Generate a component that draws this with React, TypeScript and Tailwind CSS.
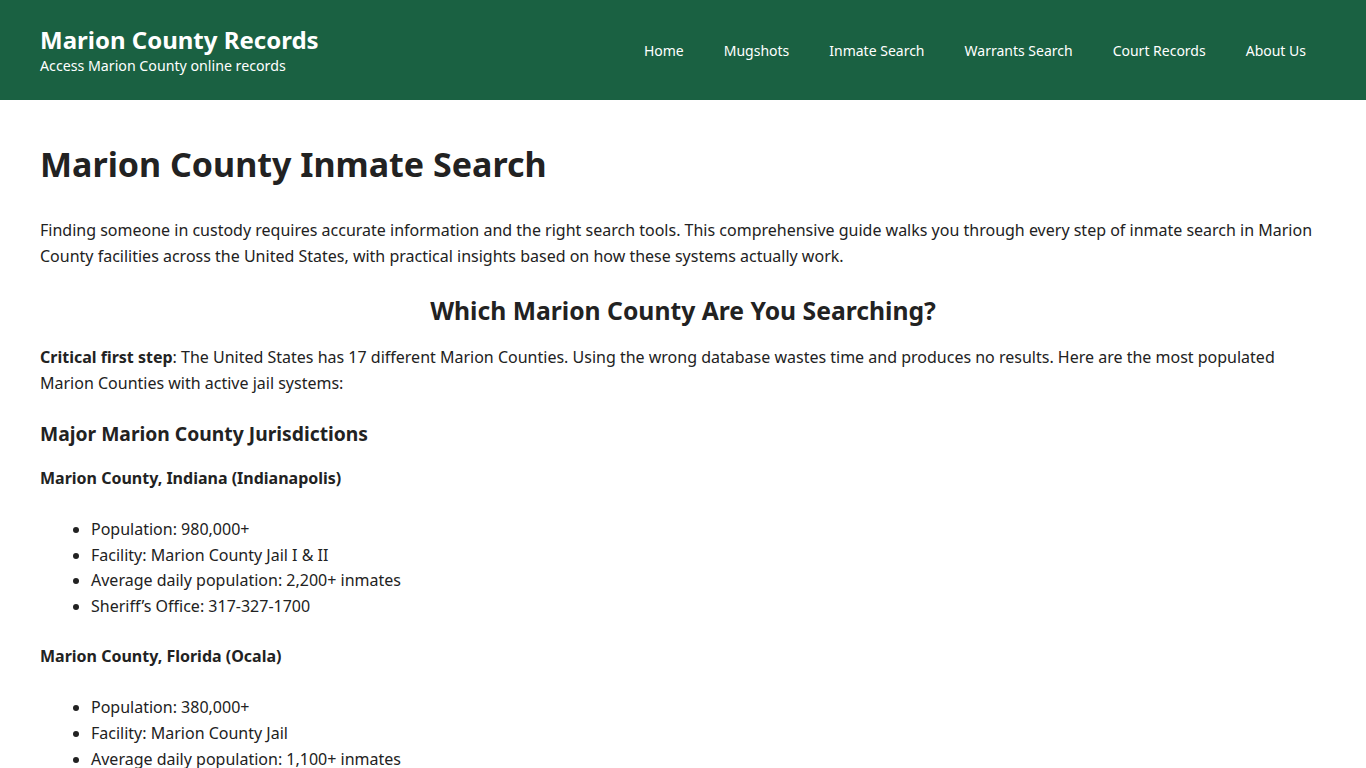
const navLinks = ["Home", "Mugshots", "Inmate Search", "Warrants Search", "Court Records", "About Us"];

const counties = [
  {
    name: "Marion County, Indiana (Indianapolis)",
    facts: [
      "Population: 980,000+",
      "Facility: Marion County Jail I & II",
      "Average daily population: 2,200+ inmates",
      "Sheriff’s Office: 317-327-1700",
    ],
  },
  {
    name: "Marion County, Florida (Ocala)",
    facts: [
      "Population: 380,000+",
      "Facility: Marion County Jail",
      "Average daily population: 1,100+ inmates",
      "Sheriff’s Office: 352-732-8181",
    ],
  },
];

export default function App() {
  return (
    <div className="min-h-screen bg-white text-[#222222] font-['Noto_Sans',sans-serif]">
      <header className="bg-[#1a6142] h-[100px] px-10 flex items-center justify-between text-white">
        <div className="flex flex-col pt-[2px]">
          <a href="#" className="text-[24px] font-bold leading-[30px]">Marion County Records</a>
          <span className="text-[14.2px] leading-[22px]">Access Marion County online records</span>
        </div>
        <nav className="flex items-center gap-10 pr-5 text-[14px]">
          {navLinks.map(link => (
            <a key={link} href="#">{link}</a>
          ))}
        </nav>
      </header>

      <main className="px-10 pt-[40px]">
        <h1 className="text-[34px] font-bold leading-[48px] mb-[29px]">Marion County Inmate Search</h1>

        <p className="text-[16px] leading-[26px] mb-[26px]">
          Finding someone in custody requires accurate information and the right search tools. This comprehensive guide walks you through every step of inmate search in Marion County facilities across the United States, with practical insights based on how these systems actually work.
        </p>

        <h2 className="text-[24.7px] font-bold leading-[32px] text-center mb-[17px]">Which Marion County Are You Searching?</h2>

        <p className="text-[16px] leading-[26px] mb-[24px]">
          <strong>Critical first step</strong>: The United States has 17 different Marion Counties. Using the wrong database wastes time and produces no results. Here are the most populated Marion Counties with active jail systems:
        </p>

        <h3 className="text-[19.3px] font-bold leading-[28px] mb-[18px]">Major Marion County Jurisdictions</h3>

        {counties.map(county => (
          <section key={county.name} className="mb-[25px]">
            <h4 className="text-[16px] font-bold leading-[24px] mb-[27px]">{county.name}</h4>
            <ul className="list-disc pl-[51px] text-[16px] leading-[25.6px]">
              {county.facts.map(fact => (
                <li key={fact}>{fact}</li>
              ))}
            </ul>
          </section>
        ))}
      </main>
    </div>
  );
}
